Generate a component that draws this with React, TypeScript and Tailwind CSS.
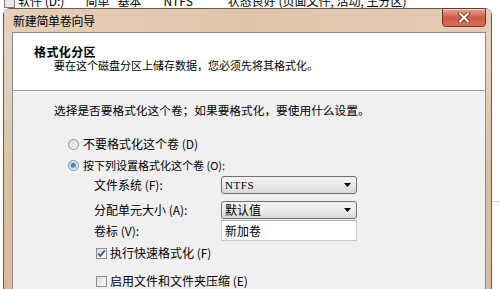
import React from "react";

const Radio = ({ checked }: { checked?: boolean }) => (
  <span className="flex h-[11px] w-[11px] items-center justify-center rounded-full border border-[#8e8f8f] bg-gradient-to-br from-[#d6d6d6] to-[#fbfbfb]">
    {checked && (
      <span className="h-[5px] w-[5px] rounded-full bg-gradient-to-br from-[#1a5fa8] to-[#6fb6ec] shadow-[0_0_1px_1px_#a9d4f5]" />
    )}
  </span>
);

const Check = ({ checked }: { checked?: boolean }) => (
  <span className="flex h-[11px] w-[11px] items-center justify-center border border-[#8e8f8f] bg-gradient-to-br from-[#dcdcdc] to-[#fcfcfc]">
    {checked && (
      <svg width="9" height="9" viewBox="0 0 9 9">
        <path d="M1.2 4.6 L3.5 7 L7.8 1.5" fill="none" stroke="#3553a4" strokeWidth="1.8" />
      </svg>
    )}
  </span>
);

const Select = ({ value, serif }: { value: string; serif?: boolean }) => (
  <div className="flex h-[18px] w-[136px] items-center justify-between rounded-[3px] border border-[#707070] bg-gradient-to-b from-[#f3f3f3] via-[#ebebeb] to-[#d9d9d9] pl-[3px] pr-[5px]">
    <span
      className={
        serif
          ? "font-['Liberation_Serif',serif] text-[11px] leading-[14px] tracking-[0.6px]"
          : "text-[12px] leading-[14px]"
      }
    >
      {value}
    </span>
    <svg width="7" height="4" viewBox="0 0 7 4">
      <path d="M0 0 H7 L3.5 4 Z" fill="#000" />
    </svg>
  </div>
);

const CloseButton = () => (
  <div className="-mt-[1px] flex h-[19px] w-[44px] items-center justify-center rounded-b-[4px] rounded-t-[2px] border border-[#7a3327] bg-gradient-to-b from-[#e9a897] via-[#cf5a43] to-[#d86e57] shadow-[inset_0_1px_0_#f6d2c8]">
    <svg width="12" height="11" viewBox="0 0 12 11">
      <path d="M2 1.5 L10 9.5 M10 1.5 L2 9.5" stroke="#6a2a20" strokeWidth="3.6" strokeLinecap="square" />
      <path d="M2 1.5 L10 9.5 M10 1.5 L2 9.5" stroke="#ffffff" strokeWidth="2" strokeLinecap="square" />
    </svg>
  </div>
);

const App = () => {
  return (
    <div className="relative h-[289px] w-[500px] overflow-hidden bg-white font-['Noto_Sans_CJK_SC','Noto_Sans',sans-serif] text-black">
      {/* window behind the dialog, only its bottom edge shows */}
      <div className="h-[8px] overflow-hidden">
        <div className="-mt-[6px] flex items-center text-[12px] leading-[14px] whitespace-nowrap">
          <span className="ml-[4px] mt-[1px] h-[12px] w-[11px] border border-[#7a7a7a] bg-[#e8e8e8]" />
          <span className="ml-[3px]">软件 (D:)</span>
          <span className="ml-[21px]">简单</span>
          <span className="ml-[8px]">基本</span>
          <span className="ml-[22px]">NTFS</span>
          <span className="ml-[35px]">状态良好 (页面文件, 活动, 主分区)</span>
        </div>
      </div>

      <div className="flex">
        <div className="ml-[3px] flex w-[489px] flex-col rounded-t-[7px] border border-[#6e5a4a] bg-gradient-to-b from-[#ead8c6] via-[#dcc1a6] to-[#d8b79c]">
          {/* title bar */}
          <div className="flex h-[23px] items-start justify-between bg-gradient-to-r from-[#e6d0bb] via-[#dec4aa] to-[#e3ccb5] pl-[9px] pr-[5px]">
            <span className="mt-[5px] text-[12px] leading-[14px] tracking-[-0.3px]">新建简单卷向导</span>
            <CloseButton />
          </div>

          {/* client area */}
          <div className="ml-[8px] mr-[5px] flex h-[300px] flex-col border border-[#8d8d8d] bg-[#f0f0f0]">
            <div className="h-[58px] border-b border-[#a0a0a0] bg-white">
              <div className="ml-[21px] mt-[12px] text-[12px] leading-[13px] font-bold tracking-[0.4px]">格式化分区</div>
              <div className="ml-[41px] mt-[1px] text-[11px] leading-[13px]">要在这个磁盘分区上储存数据，您必须先将其格式化。</div>
            </div>

            <div className="flex flex-col border-t border-white pl-[41px] text-[12px] leading-[14px]">
              <div className="mt-[8px] flex h-[20px] items-center text-[11.7px]">
                选择是否要格式化这个卷；如果要格式化，要使用什么设置。
              </div>

              <div className="ml-[14px] mt-[14px] flex h-[20px] items-center gap-[4px]">
                <Radio />
                <span>不要格式化这个卷 (D)</span>
              </div>
              <div className="ml-[14px] mt-[1px] flex h-[20px] items-center gap-[4px]">
                <Radio checked />
                <span className="text-[11px]">按下列设置格式化这个卷 (O):</span>
              </div>

              <div className="ml-[40px] mt-[1px] flex h-[18px] items-center">
                <span className="w-[127px]">文件系统 (F):</span>
                <Select value="NTFS" serif />
              </div>
              <div className="ml-[40px] mt-[7px] flex h-[18px] items-center">
                <span className="w-[127px]">分配单元大小 (A):</span>
                <Select value="默认值" />
              </div>
              <div className="ml-[40px] mt-[1px] flex h-[21px] items-center">
                <span className="w-[127px]">卷标 (V):</span>
                <div className="flex h-[21px] w-[136px] items-center border border-[#c8c8c8] border-t-[#a9abb1] bg-white pl-[3px]">
                  新加卷
                </div>
              </div>

              <div className="ml-[42px] mt-[2px] flex h-[20px] items-center gap-[3px]">
                <Check checked />
                <span>执行快速格式化 (F)</span>
              </div>
              <div className="ml-[42px] mt-[8px] flex h-[20px] items-center gap-[3px]">
                <Check />
                <span>启用文件和文件夹压缩 (E)</span>
              </div>
            </div>
          </div>
        </div>

        <div className="flex flex-1 flex-col bg-white">
          <div className="mt-[193px] h-[1px] bg-[#d0d0d0]" />
        </div>
      </div>
    </div>
  );
};

export default App;
